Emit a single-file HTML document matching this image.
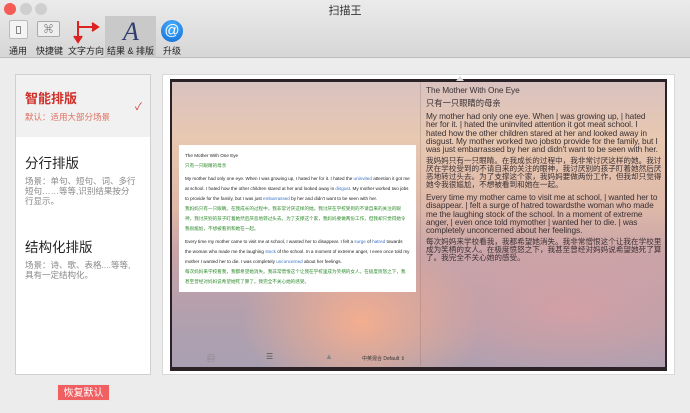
<!DOCTYPE html>
<html><head><meta charset="utf-8"><style>
*{margin:0;padding:0;box-sizing:border-box}
body{width:690px;height:413px;overflow:hidden;background:#ececec;font-family:"Liberation Sans","Noto Sans CJK SC",sans-serif;position:relative}
.abs{position:absolute}
#top{left:0;top:0;width:690px;height:58px;background:linear-gradient(#ebebeb,#d6d6d6);border-bottom:1px solid #bdbdbd}
.tl{top:3px;width:12px;height:12px;border-radius:50%}
.tb{font-size:9px;color:#222;top:44px;white-space:nowrap}
#left{left:15px;top:74px;width:136px;height:301px;background:#fff;border:1px solid #d0d0d0}
#right{left:162px;top:74px;width:513px;height:301px;background:#fff;border:1px solid #d8d8d8}
#img{left:170px;top:79px;width:497px;height:292px;border:2px solid #2a2226;border-top-width:3px;border-bottom-width:4px;
background:
radial-gradient(ellipse 120px 90px at 190px 240px,rgba(250,175,140,.9),rgba(250,175,140,0)),
radial-gradient(ellipse 200px 80px at 400px 230px,rgba(230,160,160,.6),rgba(230,160,160,0)),
linear-gradient(180deg,#d9c2c0 0%,#e8c8b0 20%,#ddb7a8 45%,#c8a4a8 60%,#b4a0ad 80%,#a8a0b2 100%)}
#card{left:179px;top:145px;width:237px;height:147px;background:#fff;font-size:4.6px;line-height:10px;color:#222;padding:6px 6px}
.g{color:#2e8b2e}.b{color:#3b73c8}
#rt{left:426px;top:86px;width:232px;font-size:8.3px;line-height:8.2px;color:#3a3033;letter-spacing:-.1px}
#rt p{margin-bottom:4px}
#rt .c{font-size:7.6px;letter-spacing:0;line-height:8px;width:240px}
.h{font-size:13px;font-weight:bold}
.d{font-size:8.5px;color:#888;line-height:10px}
</style></head><body>
<div id="top" class="abs"></div>
<div class="abs tl" style="left:4px;background:#f45c55"></div>
<div class="abs tl" style="left:20px;background:#cfcfcf"></div>
<div class="abs tl" style="left:35px;background:#cfcfcf"></div>
<div class="abs" style="left:0;width:690px;top:2px;text-align:center;font-size:11px;color:#333">扫描王</div>
<div class="abs" style="left:105px;top:16px;width:51px;height:42px;background:#c9c9c9"></div>
<div class="abs" style="left:9px;top:20px;width:19px;height:19px;background:#f4f4f4;border:1px solid #bbb;border-radius:2px"></div>
<div class="abs" style="left:16px;top:26px;width:5px;height:8px;border:1px solid #888"></div>
<div class="abs" style="left:37px;top:21px;width:23px;height:16px;background:#eee;border:1px solid #aaa;border-radius:2px;font-size:9px;text-align:center;line-height:14px;color:#333">⌘</div>
<svg class="abs" style="left:72px;top:18px" width="30" height="26"><path d="M6 3V22M2 18l4 6 4-6M6 9H24M20 5l6 4-6 4" stroke="#d22" stroke-width="2" fill="#d22"/></svg>
<div class="abs" style="left:123px;top:17px;font-family:'Liberation Serif',serif;font-style:italic;font-size:26px;color:#2d3e6e">A</div>
<div class="abs" style="left:161px;top:20px;width:22px;height:22px;border-radius:50%;background:radial-gradient(circle at 50% 30%,#4db3ff,#0a68d6);color:#fff;font-size:15px;text-align:center;line-height:21px">@</div>
<div class="abs tb" style="left:9px">通用</div>
<div class="abs tb" style="left:36px">快捷键</div>
<div class="abs tb" style="left:68px">文字方向</div>
<div class="abs tb" style="left:107px">结果 &amp; 排版</div>
<div class="abs tb" style="left:163px">升级</div>

<div id="left" class="abs"></div>
<div class="abs" style="left:16px;top:75px;width:134px;height:62px;background:#f1f1f1"></div>
<div class="abs h" style="left:25px;top:88px;color:#d0302a">智能排版</div>
<div class="abs" style="left:25px;top:111px;font-size:8.5px;color:#e07060">默认：适用大部分场景</div>
<div class="abs" style="left:135px;top:98px;font-size:10px;color:#d0302a">✓</div>
<div class="abs h" style="left:25px;top:152px;color:#222;font-weight:normal;font-size:13.5px">分行排版</div>
<div class="abs d" style="left:25px;top:176px;width:112px">场景：单句、短句、词、多行短句……等等,识别结果按分行显示。</div>
<div class="abs h" style="left:25px;top:236px;color:#222;font-weight:normal;font-size:13.5px">结构化排版</div>
<div class="abs d" style="left:25px;top:260px;width:112px">场景：诗、歌、表格....等等,具有一定结构化。</div>

<div class="abs" style="left:57px;top:384px;width:53px;height:17px;background:#f06062;color:#fff;font-size:10px;text-align:center;line-height:17px;border:1px solid #e8e8e8">恢复默认</div>

<div id="right" class="abs"></div>
<div id="img" class="abs"></div>
<div class="abs" style="left:420px;top:82px;width:1px;height:284px;background:rgba(120,100,100,.25)"></div>
<div class="abs" style="left:456px;top:76px;width:0;height:0;border-left:4px solid transparent;border-right:4px solid transparent;border-bottom:5px solid #ddd"></div>
<div id="card" class="abs">
<div>The Mother With One Eye</div>
<div class="g">只有一只眼睛的母亲</div>
<div style="margin-top:3px">My mother had only one eye. When I was growing up, I hated her for it. I hated the <span class="b">uninvited</span> attention it got me at school. I hated how the other children stared at her and looked away in <span class="b">disgust</span>. My mother worked two jobs to provide for the family, but I was just <span class="b">embarrassed</span> by her and didn't want to be seen with her.</div>
<div class="g">我妈妈只有一只眼睛。在我成长的过程中，我非常讨厌这样的她。我讨厌在学校受到的不请自来的关注的眼神，我讨厌别的孩子盯着她然后厌恶地转过头去。为了支撑这个家，我妈妈要做两份工作，但我却只觉得她令我很尴尬，不想被看到和她在一起。</div>
<div style="margin-top:3px">Every time my mother came to visit me at school, I wanted her to disappear. I felt a <span class="b">surge</span> of <span class="b">hatred</span> towards the woman who made me the laughing <span class="b">stock</span> of the school. In a moment of extreme anger, I even once told my mother I wanted her to die. I was completely <span class="b">unconcerned</span> about her feelings.</div>
<div class="g">每次妈妈来学校看我，我都希望她消失。我非常憎恨这个让我在学校里成为笑柄的女人。在极度愤怒之下，我甚至曾经对妈妈说希望她死了算了。我完全不关心她的感受。</div>
</div>
<div id="rt" class="abs">
<p style="margin-bottom:5px">The Mother With One Eye</p>
<p class="c" style="margin-bottom:5px;font-size:8.3px">只有一只眼睛的母亲</p>
<p>My mother had only one eye. When | was growing up, | hated her for it. | hated the uninvited attention it got meat school. I hated how the other children stared at her and looked away in disgust. My mother worked two jobsto provide for the family, but I was just embarrassed by her and didn't want to be seen with her.</p>
<p class="c">我妈妈只有一只眼睛。在我成长的过程中，我非常讨厌这样的她。我讨厌在学校受到的不请自来的关注的眼神，我讨厌别的孩子盯着她然后厌恶地转过头去。为了支撑这个家，我妈妈要做两份工作，但我却只觉得她令我很尴尬，不想被看到和她在一起。</p>
<p>Every time my mother came to visit me at school, | wanted her to disappear. | felt a surge of hatred towardsthe woman who made me the laughing stock of the school. In a moment of extreme anger, | even once told mymother | wanted her to die. | was completely unconcerned about her feelings.</p>
<p class="c">每次妈妈来学校看我，我都希望她消失。我非常憎恨这个让我在学校里成为笑柄的女人。在极度愤怒之下，我甚至曾经对妈妈说希望她死了算了。我完全不关心她的感受。</p>
</div>
<div class="abs" style="left:207px;top:353px;font-size:8px;color:#777">▤</div>
<div class="abs" style="left:266px;top:352px;font-size:8px;color:#555">☰</div>
<div class="abs" style="left:325px;top:352px;font-size:8px;color:#888">▲</div>
<div class="abs" style="left:362px;top:355px;font-size:5px;color:#333">中英混合 Default ⇕</div>
</body></html>
